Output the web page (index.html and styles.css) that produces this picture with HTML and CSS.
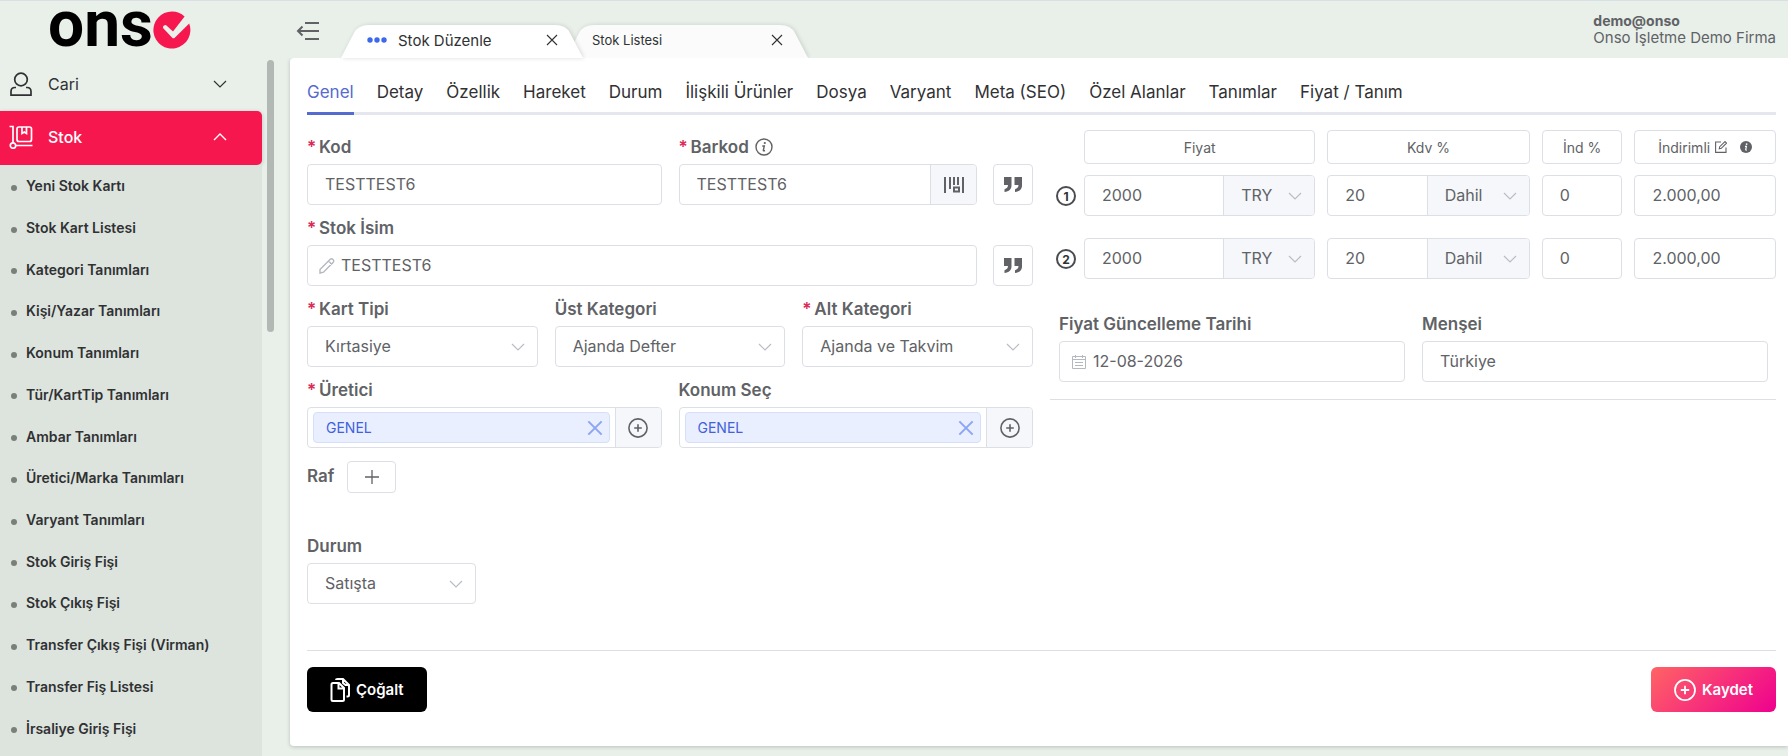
FILE: index.html
```html
<!DOCTYPE html>
<html lang="tr">
<head>
    <meta charset="UTF-8">
    <meta name="viewport" content="width=device-width, initial-scale=1.0">
    <title>Stok Düzenle - Onso</title>
    <link rel="stylesheet" href="styles.css">
</head>
<body>
    <!-- shared icons -->
    <svg class="sprite" aria-hidden="true">
        <symbol id="i-down" viewBox="0 0 14 8"><path d="M1 1l6 6 6-6" fill="none" stroke="currentColor" stroke-width="1.2"/></symbol>
        <symbol id="i-up" viewBox="0 0 14 8"><path d="M1 7l6-6 6 6" fill="none" stroke="currentColor" stroke-width="1.4"/></symbol>
        <symbol id="i-close" viewBox="0 0 12 12"><path d="M1 1l10 10M11 1L1 11" fill="none" stroke="currentColor"/></symbol>
        <symbol id="i-add" viewBox="0 0 20 20"><circle cx="10" cy="10" r="9.1" fill="none" stroke="currentColor" stroke-width="1.6"/><path d="M10 6.2v7.6M6.2 10h7.6" stroke="currentColor" stroke-width="1.6"/></symbol>
        <symbol id="i-quote" viewBox="0 0 20 16"><path d="M1 0h7.500v8.500c0 3.600-2.500 6-7 6.500v-2.800c2.200-.6 3.500-2 3.500-4.200H1zM11.500 0H19v8.500c0 3.600-2.500 6-7 6.500v-2.800c2.200-.6 3.500-2 3.500-4.200h-4z" fill="currentColor"/></symbol>
        <symbol id="i-tab" viewBox="0 0 242 33" preserveAspectRatio="none"><path d="M0 33L13 8Q17 0 28 0H214Q225 0 229 8L242 33Z" fill="currentColor"/></symbol>
    </svg>

    <div class="app">
        <aside class="sidebar">
            <a class="logo" href="#" aria-label="Onso">
                <span class="logo-text">ons</span>
                <svg class="logo-mark" viewBox="0 0 38 38">
                    <path d="M19 .5A18.500 18.500 0 0 1 31.600 5.400L20 20.500l-6-5.500a2 2 0 0 0-3.500 2.500l8.500 9a2 2 0 0 0 3 0L36.200 12.500A18.500 18.500 0 1 1 19 .5z" fill="#f7174f"/>
                </svg>
            </a>
            <div class="menu-wrap">
                <nav class="menu">
                    <button class="menu-item" type="button">
                        <svg class="menu-icon" viewBox="0 0 24 24" fill="none" stroke="currentColor" stroke-width="1.7"><circle cx="12" cy="7.500" r="6.300"/><path d="M7 15.500H6Q2 15.500 2 19.500V23.200H22V19.500Q22 15.500 18 15.500H17"/></svg>
                        <span>Cari</span>
                        <svg class="menu-arrow"><use href="#i-down"/></svg>
                    </button>
                    <button class="menu-item active" type="button">
                        <svg class="menu-icon" viewBox="0 0 24 24" fill="none" stroke="currentColor" stroke-width="1.700"><path d="M.5 1.500H4V18M7 20.500H23.500"/><circle cx="4" cy="20.500" r="2.700"/><rect x="8" y="2" width="14.500" height="14.500" rx="2"/><path d="M13 2v6.500l2.300-1.500 2.200 1.500V2"/></svg>
                        <span>Stok</span>
                        <svg class="menu-arrow"><use href="#i-up"/></svg>
                    </button>
                    <ul class="submenu">
                        <li><a href="#">Yeni Stok Kartı</a></li>
                        <li><a href="#">Stok Kart Listesi</a></li>
                        <li><a href="#">Kategori Tanımları</a></li>
                        <li><a href="#">Kişi/Yazar Tanımları</a></li>
                        <li><a href="#">Konum Tanımları</a></li>
                        <li><a href="#">Tür/KartTip Tanımları</a></li>
                        <li><a href="#">Ambar Tanımları</a></li>
                        <li><a href="#">Üretici/Marka Tanımları</a></li>
                        <li><a href="#">Varyant Tanımları</a></li>
                        <li><a href="#">Stok Giriş Fişi</a></li>
                        <li><a href="#">Stok Çıkış Fişi</a></li>
                        <li><a href="#">Transfer Çıkış Fişi (Virman)</a></li>
                        <li><a href="#">Transfer Fiş Listesi</a></li>
                        <li><a href="#">İrsaliye Giriş Fişi</a></li>
                    </ul>
                </nav>
                <div class="scroll-thumb"></div>
            </div>
        </aside>

        <div class="main">
            <header class="topbar">
                <button class="collapse" type="button" aria-label="Menüyü daralt">
                    <svg width="24" height="20" viewBox="0 0 24 20" fill="none" stroke="currentColor" stroke-width="2"><path d="M9 2H23M2 10H23M9 18H23M6.500 5.500L2 10l4.500 4.500"/></svg>
                </button>
                <div class="page-tabs">
                    <div class="page-tab current">
                        <svg class="tab-shape"><use href="#i-tab"/></svg>
                        <svg class="dots" viewBox="0 0 20 6"><circle cx="3" cy="3" r="2.700"/><circle cx="10" cy="3" r="2.700"/><circle cx="17" cy="3" r="2.700"/></svg>
                        <a href="#">Stok Düzenle</a>
                        <button type="button" aria-label="Kapat"><svg><use href="#i-close"/></svg></button>
                    </div>
                    <div class="page-tab">
                        <svg class="tab-shape"><use href="#i-tab"/></svg>
                        <a href="#">Stok Listesi</a>
                        <button type="button" aria-label="Kapat"><svg><use href="#i-close"/></svg></button>
                    </div>
                </div>
                <div class="user">
                    <strong>demo@onso</strong>
                    <span>Onso İşletme Demo Firma</span>
                </div>
            </header>

            <main class="panel">
                <nav class="nav-tabs">
                    <a class="active" href="#">Genel</a>
                    <a href="#">Detay</a>
                    <a href="#">Özellik</a>
                    <a href="#">Hareket</a>
                    <a href="#">Durum</a>
                    <a href="#">İlişkili Ürünler</a>
                    <a href="#">Dosya</a>
                    <a href="#">Varyant</a>
                    <a href="#">Meta (SEO)</a>
                    <a href="#">Özel Alanlar</a>
                    <a href="#">Tanımlar</a>
                    <a href="#">Fiyat / Tanım</a>
                </nav>

                <form class="form">
                    <div class="form-cols">
                        <section class="left">
                            <div class="row two">
                                <div class="field">
                                    <label class="required" for="kod">Kod</label>
                                    <input class="box" id="kod" type="text" value="TESTTEST6">
                                </div>
                                <div class="with-button">
                                    <div class="field">
                                        <label class="required" for="barkod">Barkod
                                            <svg class="info" viewBox="0 0 18 18"><circle cx="9" cy="9" r="8" fill="none" stroke="currentColor" stroke-width="1.400"/><circle cx="9.800" cy="5" r="1.100" fill="currentColor"/><path d="M7.300 8h2l-1 4.300q-.1.900 1.700.2" fill="none" stroke="currentColor" stroke-width="1.400"/></svg>
                                        </label>
                                        <div class="box group">
                                            <input id="barkod" type="text" value="TESTTEST6">
                                            <button class="append" type="button" aria-label="Barkod oluştur">
                                                <svg width="22" height="18" viewBox="0 0 22 18" fill="none" stroke="currentColor" stroke-width="2"><path d="M2 1v16M7 1v12M11 1v8M15 1v8M20 1v16"/><rect x="11" y="11.500" width="5" height="4"/></svg>
                                            </button>
                                        </div>
                                    </div>
                                    <button class="square" type="button" aria-label="Barkod kopyala"><svg><use href="#i-quote"/></svg></button>
                                </div>
                            </div>

                            <div class="row with-button">
                                <div class="field">
                                    <label class="required" for="isim">Stok İsim</label>
                                    <div class="box group prefix">
                                        <svg width="16" height="16" viewBox="0 0 16 16" fill="none" stroke="currentColor" stroke-width="1.400"><path d="M1 15v-3.500L11 1.500q1.500-1.300 3 0t0 3L4.500 14.200zM9.500 3l3.500 3.500"/></svg>
                                        <input id="isim" type="text" value="TESTTEST6">
                                    </div>
                                </div>
                                <button class="square" type="button" aria-label="İsim kopyala"><svg><use href="#i-quote"/></svg></button>
                            </div>

                            <div class="row three">
                                <div class="field">
                                    <label class="required" for="tip">Kart Tipi</label>
                                    <div class="box select"><select id="tip"><option>Kırtasiye</option></select><svg><use href="#i-down"/></svg></div>
                                </div>
                                <div class="field">
                                    <label for="ust">Üst Kategori</label>
                                    <div class="box select"><select id="ust"><option>Ajanda Defter</option></select><svg><use href="#i-down"/></svg></div>
                                </div>
                                <div class="field">
                                    <label class="required" for="alt">Alt Kategori</label>
                                    <div class="box select"><select id="alt"><option>Ajanda ve Takvim</option></select><svg><use href="#i-down"/></svg></div>
                                </div>
                            </div>

                            <div class="row two">
                                <div class="field">
                                    <label class="required" for="uretici">Üretici</label>
                                    <div class="box group">
                                        <div class="chip">GENEL <button id="uretici" type="button" aria-label="GENEL kaldır"><svg><use href="#i-close"/></svg></button></div>
                                        <button class="append" type="button" aria-label="Üretici ekle"><svg width="20" height="20"><use href="#i-add"/></svg></button>
                                    </div>
                                </div>
                                <div class="field">
                                    <label for="konum">Konum Seç</label>
                                    <div class="box group">
                                        <div class="chip">GENEL <button id="konum" type="button" aria-label="GENEL kaldır"><svg><use href="#i-close"/></svg></button></div>
                                        <button class="append" type="button" aria-label="Konum ekle"><svg width="20" height="20"><use href="#i-add"/></svg></button>
                                    </div>
                                </div>
                            </div>

                            <div class="shelf">
                                <label for="raf">Raf</label>
                                <button id="raf" type="button" aria-label="Raf ekle"><svg width="14" height="14" viewBox="0 0 14 14"><path d="M7 0v14M0 7h14" stroke="currentColor" stroke-width="1.300"/></svg></button>
                            </div>

                            <div class="field status">
                                <label for="durum">Durum</label>
                                <div class="box select"><select id="durum"><option>Satışta</option></select><svg><use href="#i-down"/></svg></div>
                            </div>
                        </section>

                        <section class="right">
                            <div class="prices">
                                <span></span>
                                <div class="head">Fiyat</div>
                                <div class="head">Kdv %</div>
                                <div class="head">İnd %</div>
                                <div class="head">İndirimli
                                    <svg class="edit" viewBox="0 0 12 12" fill="none" stroke="currentColor" stroke-width="1.100"><path d="M6 1H.6v10.400H11V6.500M4.300 7.700l.4-2L10 .6l1.500 1.500-5.200 5.200z"/></svg>
                                    <svg class="tip" viewBox="0 0 12 12"><circle cx="6" cy="6" r="6" fill="currentColor"/><circle cx="6.600" cy="3.100" r=".9" fill="#fff"/><path d="M5 5.300h1.400L5.700 8.600q0 .7 1 .3" fill="none" stroke="#fff" stroke-width="1.200"/></svg>
                                </div>

                                <span class="no">1</span>
                                <div class="box group">
                                    <input type="text" value="2000" aria-label="Fiyat 1">
                                    <div class="append select"><select aria-label="Para birimi 1"><option>TRY</option></select><svg><use href="#i-down"/></svg></div>
                                </div>
                                <div class="box group">
                                    <input type="text" value="20" aria-label="Kdv 1">
                                    <div class="append select wide"><select aria-label="Kdv tipi 1"><option>Dahil</option></select><svg><use href="#i-down"/></svg></div>
                                </div>
                                <input class="box" type="text" value="0" aria-label="İndirim 1">
                                <input class="box" type="text" value="2.000,00" aria-label="İndirimli 1">

                                <span class="no">2</span>
                                <div class="box group">
                                    <input type="text" value="2000" aria-label="Fiyat 2">
                                    <div class="append select"><select aria-label="Para birimi 2"><option>TRY</option></select><svg><use href="#i-down"/></svg></div>
                                </div>
                                <div class="box group">
                                    <input type="text" value="20" aria-label="Kdv 2">
                                    <div class="append select wide"><select aria-label="Kdv tipi 2"><option>Dahil</option></select><svg><use href="#i-down"/></svg></div>
                                </div>
                                <input class="box" type="text" value="0" aria-label="İndirim 2">
                                <input class="box" type="text" value="2.000,00" aria-label="İndirimli 2">
                            </div>

                            <div class="origin">
                                <div class="field">
                                    <label for="tarih">Fiyat Güncelleme Tarihi</label>
                                    <div class="box group prefix">
                                        <svg width="16" height="16" viewBox="0 0 16 16" fill="none" stroke="currentColor" stroke-width="1"><path d="M1.500 2.500h13v12h-13zM1.500 5.500h13M4.500 1v3M11.500 1v3M4 8.500h8M4 11.500h8"/></svg>
                                        <input id="tarih" type="text" value="12-08-2026">
                                    </div>
                                </div>
                                <div class="field">
                                    <label for="mensei">Menşei</label>
                                    <input class="box" id="mensei" type="text" value="Türkiye">
                                </div>
                            </div>
                        </section>
                    </div>

                    <div class="actions">
                        <button class="btn copy" type="button">
                            <svg width="20" height="24" viewBox="0 0 20 24" fill="none" stroke="currentColor" stroke-width="2"><path d="M1.500 6.500q0-1.500 1.500-1.500h6l5 5v11.500q0 1.500-1.500 1.500H3q-1.500 0-1.500-1.500zM8.500 5v5.500h5.500M6 2q0-1 1.500-1H13l6 6v10q0 1.500-1.500 1.500H16.500M13 1v4l2.500 2H19"/></svg>
                            Çoğalt
                        </button>
                        <button class="btn save" type="button">
                            <svg width="22" height="22"><use href="#i-add"/></svg>
                            Kaydet
                        </button>
                    </div>
                </form>
            </main>
        </div>
    </div>
</body>
</html>
```
FILE: styles.css
```css
* {
    box-sizing: border-box;
}
body {
    margin: 0;
    font-family: Inter, "Noto Sans", sans-serif;
    font-size: 16px;
    color: #606266;
    background-color: #e9f0ea;
}
a {
    color: inherit;
    text-decoration: none;
}
button, input, select {
    font: inherit;
    color: inherit;
    margin: 0;
    padding: 0;
    border: none;
    background: none;
}
button {
    cursor: pointer;
}
svg {
    display: block;
    flex: none;
}
.sprite {
    position: absolute;
    width: 0;
    height: 0;
}
.app {
    display: flex;
    gap: 16px;
    min-height: 100vh;
    border-top: 1px solid #d9e0e5;
}

/* sidebar */
.sidebar {
    width: 274px;
    flex: none;
    display: flex;
    flex-direction: column;
}
.logo {
    display: flex;
    align-items: center;
    height: 57px;
    padding-left: 48px;
    color: #000;
}
.logo-text {
    font-family: Roboto, sans-serif;
    font-size: 64px;
    font-weight: 700;
    line-height: 48px;
    padding-bottom: 10px;
}
.logo-mark {
    width: 38px;
    height: 38px;
}
.menu-wrap {
    flex: 1;
    display: flex;
    gap: 5px;
}
.menu {
    flex: 1;
    display: flex;
    flex-direction: column;
}
.menu-item {
    display: flex;
    align-items: center;
    height: 53px;
    padding: 0 35px 2px 9px;
    color: #303133;
    text-align: left;
}
.menu-item span {
    flex: 1;
    margin-left: 15px;
}
.menu-item.active {
    height: 54px;
    color: #fff;
    font-weight: 500;
    background-color: #f7174f;
    border-radius: 0 5px 5px 0;
    box-shadow: 0 1px 4px rgba(0, 0, 0, 0.2);
}
.menu-icon {
    width: 24px;
    height: 24px;
}
.menu-arrow {
    width: 14px;
    height: 8px;
}
.submenu {
    flex: 1;
    display: grid;
    grid-auto-rows: 1fr;
    margin: 0;
    padding: 0 0 7px;
    list-style: none;
    background-color: #dde4de;
    font-size: 14px;
    font-weight: 600;
    color: #303133;
}
.submenu li {
    display: flex;
    align-items: center;
}
.submenu li::before {
    content: "";
    width: 6px;
    height: 6px;
    margin: 4px 9px 0 11px;
    border-radius: 50%;
    background-color: #7b7f7c;
}
.scroll-thumb {
    width: 7px;
    height: 39%;
    margin-top: 2px;
    border-radius: 4px;
    background-color: #b2b8b4;
}

/* top bar */
.main {
    flex: 1;
    min-width: 0;
    display: flex;
    flex-direction: column;
    padding-bottom: 10px;
}
.topbar {
    display: flex;
    height: 57px;
    padding-right: 12px;
}
.collapse {
    width: 51px;
    padding: 2px 0 0 6px;
}
.page-tabs {
    display: flex;
    align-items: flex-end;
    flex: 1;
}
.page-tab {
    position: relative;
    display: flex;
    align-items: center;
    width: 242px;
    height: 33px;
    padding: 0 25px 3px 26px;
    font-size: 13px;
    color: #303133;
}
.page-tab + .page-tab {
    margin-left: -17px;
}
.page-tab.current {
    z-index: 1;
    font-size: 15px;
}
.tab-shape {
    position: absolute;
    inset: 0;
    width: 100%;
    height: 100%;
    color: #fafbfa;
    filter: drop-shadow(1px 0 2px rgba(0, 0, 0, 0.14));
}
.current .tab-shape {
    color: #fff;
}
.page-tab > *:not(.tab-shape) {
    position: relative;
}
.page-tab a {
    flex: 1;
}
.page-tab button svg {
    width: 12px;
    height: 12px;
    stroke-width: 1.1;
}
.dots {
    width: 20px;
    height: 6px;
    margin-right: 11px;
    fill: #3d68ec;
}
.user {
    display: flex;
    flex-direction: column;
    padding-top: 11px;
    font-size: 15px;
    line-height: 17px;
}
.user strong {
    font-size: 14px;
}

/* panel */
.panel {
    flex: 1;
    display: flex;
    flex-direction: column;
    padding: 15px 12px 34px 17px;
    background-color: #fff;
    border-radius: 4px 0 0 4px;
    box-shadow: 0 1px 4px rgba(0, 0, 0, 0.2);
    clip-path: inset(0 0 -8px -8px);
}
.nav-tabs {
    display: flex;
    gap: 23px;
    font-size: 17px;
    color: #303133;
    border-bottom: 3px solid #e4e7ed;
}
.nav-tabs a {
    line-height: 39px;
    margin-bottom: -3px;
    border-bottom: 3px solid transparent;
}
.nav-tabs .active {
    color: #566bd0;
    border-color: #566bd0;
}
.form {
    flex: 1;
    display: flex;
    flex-direction: column;
}
.form-cols {
    flex: 1;
    display: grid;
    grid-template-columns: 1fr 1fr;
    gap: 17px;
}
.left {
    padding-top: 18px;
}
.row {
    display: grid;
    column-gap: 17px;
    margin-bottom: 9px;
}
.two {
    grid-template-columns: 1fr 1fr;
}
.three {
    grid-template-columns: 1fr 1fr 1fr;
}
.with-button {
    display: grid;
    grid-template-columns: 1fr 40px;
    column-gap: 16px;
    align-items: end;
}
.field {
    min-width: 0;
}
label {
    display: flex;
    align-items: center;
    height: 31px;
    padding-bottom: 3px;
    font-size: 17px;
    font-weight: 600;
}
.required::before {
    content: "*";
    width: 12px;
    color: #dc2a55;
}
.info {
    width: 18px;
    height: 18px;
    margin-left: 6px;
}
.box {
    display: block;
    width: 100%;
    height: 41px;
    border: 1px solid #dcdfe6;
    border-radius: 4px;
    background-color: #fff;
}
input.box, .group input, .select select {
    padding-left: 17px;
    padding-bottom: 1px;
}
.group {
    display: flex;
    overflow: hidden;
}
.group input {
    flex: 1;
    width: 0;
}
.prefix {
    align-items: center;
    padding-left: 11px;
    color: #b4b8c0;
}
.prefix input {
    height: 100%;
    padding-left: 6px;
    color: #606266;
}
.append {
    flex: none;
    display: flex;
    align-items: center;
    justify-content: center;
    width: 46px;
    border-left: 1px solid #dcdfe6;
    background-color: #f5f7fb;
}
.select {
    position: relative;
}
.select select {
    appearance: none;
    width: 100%;
    height: 100%;
}
.select svg {
    position: absolute;
    right: 12px;
    top: calc(50% - 4px);
    width: 14px;
    height: 8px;
    color: #b9bdc5;
    pointer-events: none;
}
.append.select {
    width: 91px;
}
.append.wide {
    width: 102px;
}
.square {
    height: 41px;
    border: 1px solid #dcdfe6;
    border-radius: 4px;
}
.square svg {
    width: 20px;
    height: 16px;
    margin: 0 auto;
}
.chip {
    flex: 1;
    display: flex;
    align-items: center;
    justify-content: space-between;
    margin: 4px 5px;
    padding: 0 6px 0 12px;
    font-size: 14px;
    color: #4161dc;
    border: 1px solid #d5dff8;
    border-radius: 4px;
    background-color: #e9effe;
}
.chip svg {
    width: 16px;
    height: 16px;
    color: #8ca5f5;
    stroke-width: 1.5;
}
.shelf {
    display: flex;
    align-items: center;
    gap: 13px;
    margin-top: 13px;
}
.shelf button {
    display: flex;
    align-items: center;
    justify-content: center;
    width: 49px;
    height: 32px;
    border: 1px solid #dcdfe6;
    border-radius: 4px;
}
.status {
    width: 169px;
    margin-top: 39px;
}

/* prices */
.right {
    padding-top: 15px;
}
.prices {
    display: grid;
    grid-template-columns: 22px 232fr 203fr 81fr 142fr;
    column-gap: 12px;
    align-items: center;
}
.prices .box {
    min-width: 0;
    margin-bottom: 22px;
}
.head {
    display: flex;
    align-items: center;
    justify-content: center;
    height: 34px;
    margin-bottom: 11px;
    font-size: 14px;
    border: 1px solid #dcdfe6;
    border-radius: 4px;
}
.head svg {
    width: 12px;
    height: 12px;
    margin-left: 5px;
}
.head .tip {
    margin-left: 13px;
}
.no {
    width: 20px;
    height: 20px;
    margin: 0 0 22px 6px;
    font-size: 12px;
    font-weight: 700;
    line-height: 17px;
    text-align: center;
    color: #303133;
    border: 2px solid #4a4c50;
    border-radius: 50%;
}
.origin {
    display: grid;
    grid-template-columns: 1fr 1fr;
    gap: 17px;
    margin-top: 9px;
    padding: 0 8px 17px 9px;
    border-bottom: 1px solid #dcdfe6;
}

/* bottom buttons */
.actions {
    display: flex;
    justify-content: space-between;
    padding-top: 16px;
    border-top: 1px solid #dcdfe6;
}
.btn {
    display: flex;
    align-items: center;
    gap: 6px;
    height: 45px;
    padding: 0 23px;
    font-size: 15px;
    font-weight: 600;
    color: #fff;
    border-radius: 6px;
}
.copy {
    background-color: #000;
}
.save {
    background: linear-gradient(135deg, #ff6464, #ef008f);
}
```
